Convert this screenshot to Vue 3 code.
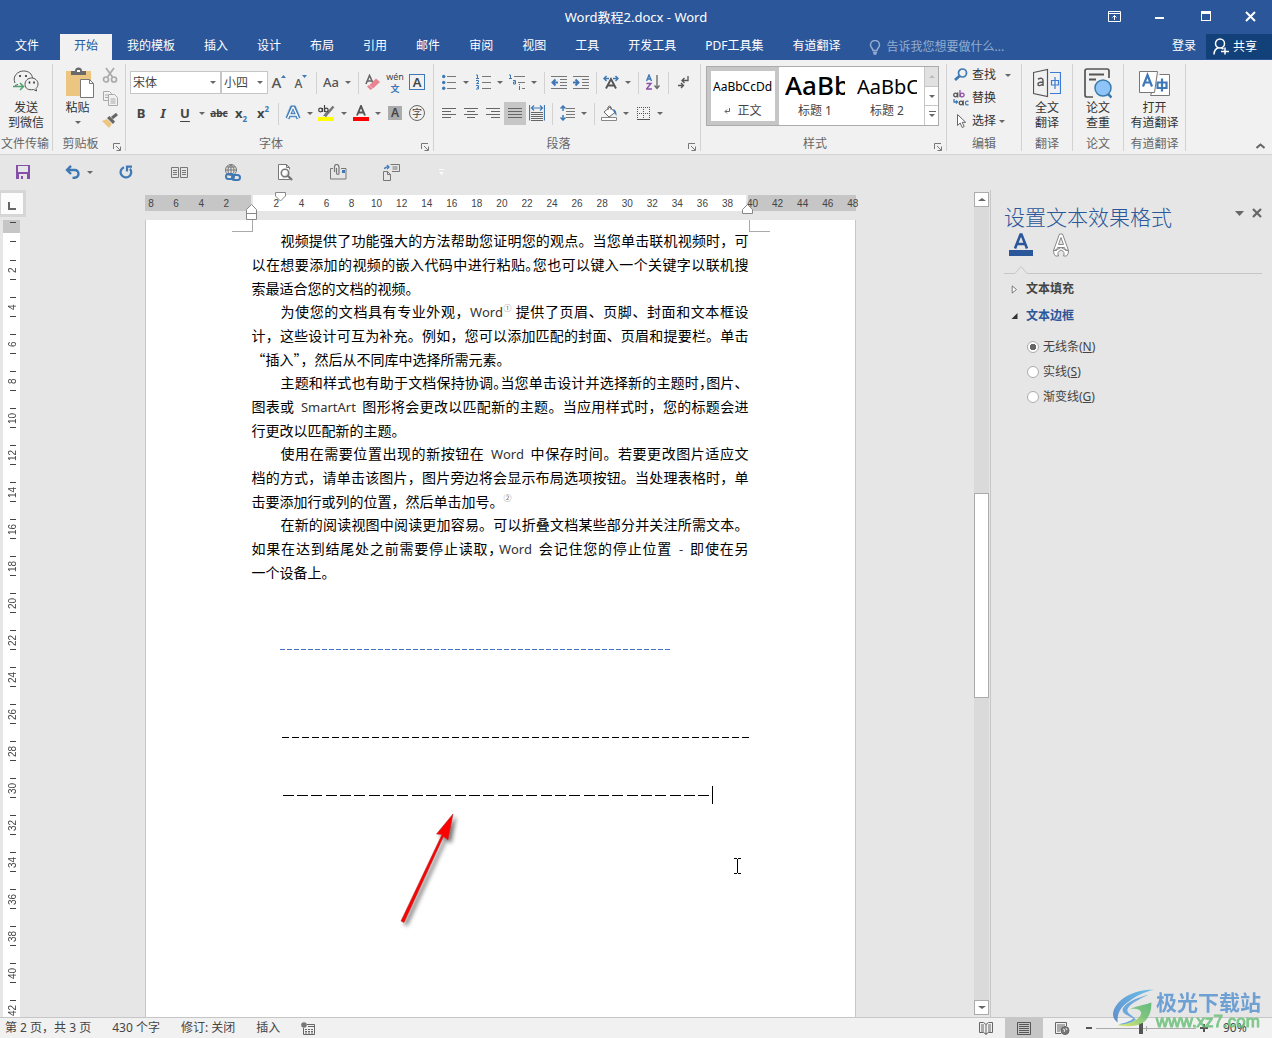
<script setup>
import { ref } from 'vue'

const tabs = ['文件', '开始', '我的模板', '插入', '设计', '布局', '引用', '邮件', '审阅', '视图', '工具', '开发工具', 'PDF工具集', '有道翻译']
const active = ref('开始')
const lineMode = ref('N')
const lineModes = [
  { key: 'N', label: '无线条' },
  { key: 'S', label: '实线' },
  { key: 'G', label: '渐变线' },
]
const zoom = ref(45)

const rulerMarks = [8, 6, 4, 2, '']
for (let n = 2; n <= 48; n += 2) rulerMarks.push(n)
const sideMarks = []
for (let n = 2; n <= 42; n += 2) sideMarks.push(n)
</script>

<template>
  <div class="app">
    <header class="top">
      <div class="titlebar">
        <h1>Word教程2.docx - Word</h1>
        <div class="winbtns">
          <button aria-label="功能区显示选项"><svg width="13" height="11" viewBox="0 0 13 11" fill="none" stroke="#fff"><path d="M.5 .5h12v10H.5zM.5 2.500h12M6.500 9V4.500M4.500 6.500l2-2 2 2" /></svg></button>
          <button aria-label="最小化"><svg width="10" height="11" viewBox="0 0 10 11"><path d="M0 6h9v2H0z" fill="#fff" /></svg></button>
          <button aria-label="最大化"><svg width="10" height="10" viewBox="0 0 10 10"><path d="M0 0h10v10H0zM1 3v6h8V3z" fill="#fff" fill-rule="evenodd" /></svg></button>
          <button aria-label="关闭"><svg width="11" height="11" viewBox="0 0 11 11" stroke="#fff" stroke-width="2"><path d="M1 1l9 9M10 1l-9 9" /></svg></button>
        </div>
      </div>
      <nav class="tabs">
        <button v-for="t in tabs" :key="t" class="tab" :class="{ on: t === active, file: t === '文件' }" @click="active = t">{{ t }}</button>
        <label class="tell">
          <svg width="12" height="15" viewBox="0 0 12 15" fill="none" stroke="#94accf" stroke-width="1.500"><path d="M4 10.500C4 8.500 1.500 7.500 1.500 5a4.300 4.300 0 0 1 9 0c0 2.500-2.500 3.500-2.500 5.500zM4 12.500h4M4.500 14h3" /></svg>
          <input type="text" placeholder="告诉我您想要做什么..." aria-label="告诉我您想要做什么">
        </label>
        <button class="login">登录</button>
        <button class="share">
          <svg width="16" height="17" viewBox="0 0 16 17" fill="none" stroke="#fff" stroke-width="1.500"><circle cx="7" cy="5.500" r="4.500" /><path d="M1 16.500c0-4 2-6 4.500-7M8.500 10l2 1M8 13.500h8M12 9.500v7" /></svg>
          共享
        </button>
      </nav>
    </header>

    <section class="ribbon">
      <div class="group g-wx">
        <div class="body">
          <button class="big">
            <svg width="26" height="32" viewBox="0 0 26 32" fill="none" stroke="#555"><path d="M2 16C-1 9 5 4 10.500 4S19 7 19.500 11M2 18.500l3-1" /><path d="M12 17.500c0-4 3-6.500 6.500-6.500s6.500 2.500 6.500 6c0 2-1 3.500-2 4.500l.5 2.500-3-1.500c-5 1-8.500-1-8.500-5z" /><path d="M7 8v2M13 8v2M16.500 14.500v2M21 14.500v2" stroke="#222" stroke-width="1.500" /><path d="M0 19.500h10M7 16l3.500 3.500L7 23" stroke="#4fa36d" stroke-width="1.500" /></svg>
            <span>发送<br>到微信</span>
          </button>
        </div>
        <div class="glabel">文件传输</div>
      </div>

      <div class="group g-clip">
        <div class="body row">
          <button class="big paste">
            <svg width="30" height="32" viewBox="0 0 30 32"><path d="M1 4h25v25H1z" fill="#ecc581" /><path d="M6 8V4h4a3.500 3.500 0 0 1 7 0h4v4z" fill="#6a6a6a" /><path d="M12 3h3v2h-3z" fill="#fff" /><path d="M15.500 12.500h9l4 4v14h-13z" fill="#fff" stroke="#777" /><path d="M24.500 12.500v4h4" fill="none" stroke="#777" /></svg>
            <span>粘贴</span><i class="caret"></i>
          </button>
          <div class="col">
            <button class="ib" aria-label="剪切"><svg width="16" height="16" viewBox="0 0 16 16" fill="none" stroke="#aaa" stroke-width="1.700"><path d="M4 1l6.500 9M12 1L5.500 10" /><circle cx="4" cy="12.500" r="2.500" /><circle cx="12" cy="12.500" r="2.500" /></svg></button>
            <button class="ib" aria-label="复制"><svg width="16" height="16" viewBox="0 0 16 16" fill="#f1f1f1" stroke="#aaa"><path d="M1.500 1.500h6l2 2v7h-8z" /><path d="M6.500 4.500h6l3 3v8h-9z" /><path d="M3 5h3M3 7.500h3M8.500 9h5M8.500 11h5M8.500 13h5" /></svg></button>
            <button class="ib" aria-label="格式刷"><svg width="16" height="16" viewBox="0 0 16 16"><path d="M0 8l5-2 5 5-3 4z" fill="#ecc581" /><path d="M5 5l2.500-2L13 8.500 11 11z" fill="#666" /><path d="M10 5l5-4" stroke="#666" stroke-width="3" /></svg></button>
          </div>
        </div>
        <div class="glabel">剪贴板</div>
        <button class="launch" aria-label="剪贴板设置"><svg width="8" height="8" viewBox="0 0 8 8" fill="none" stroke="#777"><path d="M.5 6V.5H7M3 3l4 4M7.500 3.500v4h-4" /></svg></button>
      </div>

      <div class="group g-font">
        <div class="body rows">
          <div class="row">
            <span class="combo c-face"><select aria-label="字体"><option>宋体</option></select></span>
            <span class="combo c-size"><select aria-label="字号"><option>小四</option></select></span>
            <button class="ib lat" aria-label="增大字号"><span class="t16">A</span><svg class="sup" width="5" height="3" viewBox="0 0 5 3"><path d="M0 3L2.500 0 5 3z" fill="#3e78b5" /></svg></button>
            <button class="ib lat" aria-label="减小字号"><span class="t13">A</span><svg class="sup" width="5" height="3" viewBox="0 0 5 3"><path d="M0 0L2.500 3 5 0z" fill="#3e78b5" /></svg></button>
            <i class="sep"></i>
            <button class="ib lat aa" aria-label="更改大小写">Aa</button><i class="caret cb"></i>
            <i class="sep"></i>
            <button class="ib" aria-label="清除格式"><svg width="16" height="17" viewBox="0 0 16 17"><path d="M1 10L4.500 1.500 8 9M2.500 7H7" fill="none" stroke="#666" stroke-width="1.600" /><path d="M4.500 11L11 4.500l4 3.500-7 6.500z" fill="#e8838f" /><path d="M2 12.500l2-1.500 3.500 3.500-2 1.500z" fill="#e8838f" /></svg></button>
            <button class="ib wen" aria-label="拼音指南"><span class="py">wén</span><span class="hz">文</span></button>
            <button class="ib" aria-label="字符边框"><span class="boxed">A</span></button>
          </div>
          <div class="row">
            <button class="ib lat b">B</button>
            <button class="ib lat b i">I</button>
            <button class="ib lat b u">U</button><i class="caret cb"></i>
            <button class="ib lat b s">abc</button>
            <button class="ib lat b">x<sub>2</sub></button>
            <button class="ib lat b">x<sup>2</sup></button>
            <i class="sep"></i>
            <button class="ib" aria-label="文本效果"><svg width="16" height="16" viewBox="0 0 16 16" fill="none"><path d="M2.500 13.500L7 2.500h2l4.500 11M4.500 10h7" stroke="#a9c8e8" stroke-width="5" stroke-linejoin="round" /><path d="M2.500 13.500L7 2.500h2l4.500 11M4.500 10h7" stroke="#3e78b5" stroke-width="3.600" /><path d="M2.500 13.500L7.500 2.500h1l5 11M4.500 10h7" stroke="#fff" stroke-width="1.400" /></svg></button><i class="caret cb"></i>
            <button class="ib" aria-label="突出显示"><svg width="18" height="17" viewBox="0 0 18 17"><path d="M0 12h16v4H0z" fill="#ff0" /><path d="M15.500 1.500L9 9l-2 2.500" stroke="#777" stroke-width="2.500" /><path d="M5 11l3-4 2 2-2 2z" fill="#777" /><g fill="none" stroke="#444" stroke-width="1.200"><circle cx="2.500" cy="5" r="1.800" /><path d="M4.500 3v4M6.500 0v7" /><circle cx="8.300" cy="5" r="1.800" /></g></svg></button><i class="caret cb"></i>
            <button class="ib" aria-label="字体颜色"><svg width="16" height="17" viewBox="0 0 16 17"><path d="M0 12h16v4H0z" fill="red" /><path d="M4 10.500L8 1l4 9.500M5.300 7.500h5.400" fill="none" stroke="#555" stroke-width="1.900" /></svg></button><i class="caret cb"></i>
            <button class="ib" aria-label="字符底纹"><span class="shade">A</span></button>
            <button class="ib" aria-label="带圈字符"><span class="ring">字</span></button>
          </div>
        </div>
        <div class="glabel">字体</div>
        <button class="launch" aria-label="字体设置"><svg width="8" height="8" viewBox="0 0 8 8" fill="none" stroke="#777"><path d="M.5 6V.5H7M3 3l4 4M7.500 3.500v4h-4" /></svg></button>
      </div>

      <div class="group g-para">
        <div class="body rows">
          <div class="row">
            <button class="ib" aria-label="项目符号"><svg width="14" height="16" viewBox="0 0 14 16"><path d="M5 2.500h9M5 8.500h9M5 14.500h9" stroke="#777" /><g fill="#3e78b5"><circle cx="1.700" cy="2.500" r="1.700" /><circle cx="1.700" cy="8.500" r="1.700" /><circle cx="1.700" cy="14.300" r="1.700" /></g></svg></button><i class="caret cb"></i>
            <button class="ib" aria-label="编号"><svg width="15" height="16" viewBox="0 0 15 16" fill="none"><path d="M6 2.500h9M6 8.500h9M6 14.500h9" stroke="#777" /><path d="M0 1h1.500v3.500M0 4.500h3M0 6.500h2.500v1.500L.5 9.500H3M0 11.500h2.500v3.500H0M1 13.300h1.500" stroke="#3e78b5" /></svg></button><i class="caret cb"></i>
            <button class="ib" aria-label="多级列表"><svg width="16" height="16" viewBox="0 0 16 16" fill="none"><path d="M5 2.500h11M9 8.500h7M13 14.500h3" stroke="#777" /><path d="M0 1h1.500v3.500M0 4.500h3M4 6.500h2.500v3.500H4.500V8h2M10.500 10v1M10.500 12v4" stroke="#3e78b5" /></svg></button><i class="caret cb"></i>
            <i class="sep"></i>
            <button class="ib" aria-label="减少缩进量"><svg width="16" height="13" viewBox="0 0 16 13"><path d="M0 .5h16M9 3.500h7M9 6.500h7M9 9.500h7M0 12.500h16" stroke="#777" /><path d="M7 6.500H2M4.500 3.500l-3 3 3 3" fill="none" stroke="#3e78b5" stroke-width="2" /></svg></button>
            <button class="ib" aria-label="增加缩进量"><svg width="16" height="13" viewBox="0 0 16 13"><path d="M0 .5h16M9 3.500h7M9 6.500h7M9 9.500h7M0 12.500h16" stroke="#777" /><path d="M0 6.500h5M2.500 3.500l3 3-3 3" fill="none" stroke="#3e78b5" stroke-width="2" /></svg></button>
            <i class="sep"></i>
            <button class="ib" aria-label="中文版式"><svg width="16" height="14" viewBox="0 0 16 14" fill="none"><path d="M3 13.500L8 4l5 9.500M5 10.500h6" stroke="#555" stroke-width="1.900" /><path d="M6 3.500H1M3.500 1L1 3.500 3.500 6M10 3.500h5M12.500 1L15 3.500 12.500 6" stroke="#3e78b5" stroke-width="1.500" /></svg></button><i class="caret cb"></i>
            <i class="sep"></i>
            <button class="ib" aria-label="排序"><svg width="14" height="16" viewBox="0 0 14 16" fill="none"><path d="M.5 7L3 1l2.500 6M1.500 5h3" stroke="#3e78b5" stroke-width="1.400" /><path d="M.5 9.500h4.500L.5 15H6" stroke="#8e4fa8" stroke-width="1.400" /><path d="M11 1v13M8.500 11.500L11 14.500l2.500-3" stroke="#666" stroke-width="1.300" /></svg></button>
            <i class="sep"></i>
            <button class="ib" aria-label="显示编辑标记"><svg width="11" height="13" viewBox="0 0 11 13" fill="none" stroke="#555" stroke-width="1.300"><path d="M10 0v4.500H4M6.500 2L4 4.500 6.500 7M0 9.500h5.500M3 7l2.500 2.500L3 12" /></svg></button>
          </div>
          <div class="row">
            <button class="ib" aria-label="左对齐"><svg width="14" height="10" viewBox="0 0 14 10" stroke="#666"><path d="M0 .5h14M0 3.500h9M0 6.500h14M0 9.500h9" /></svg></button>
            <button class="ib" aria-label="居中"><svg width="14" height="10" viewBox="0 0 14 10" stroke="#666"><path d="M0 .5h14M3 3.500h8M0 6.500h14M3 9.500h8" /></svg></button>
            <button class="ib" aria-label="右对齐"><svg width="14" height="10" viewBox="0 0 14 10" stroke="#666"><path d="M0 .5h14M5 3.500h9M0 6.500h14M5 9.500h9" /></svg></button>
            <button class="ib pressed" aria-label="两端对齐"><svg width="14" height="10" viewBox="0 0 14 10" stroke="#666"><path d="M0 .5h14M0 3.500h14M0 6.500h14M0 9.500h14" /></svg></button>
            <button class="ib" aria-label="分散对齐"><svg width="16" height="16" viewBox="0 0 16 16" fill="none"><path d="M.5 0v15.500M15.500 0v15.500M3 3h10M5 .5L2.500 3 5 5.500M11 .5L13.500 3 11 5.500" stroke="#3e78b5" stroke-width="1.200" /><path d="M2 7.500h12M2 9.500h12M2 11.500h12M2 13.500h12M2 15.500h12" stroke="#666" /></svg></button>
            <i class="sep"></i>
            <button class="ib" aria-label="行距"><svg width="15" height="16" viewBox="0 0 15 16" fill="none"><path d="M6 3.500h9M6 6.500h9M6 9.500h9M6 12.500h9" stroke="#777" /><path d="M3 1v5M3 10v5M.5 3.500L3 1l2.500 2.500M.5 12.500L3 15l2.500-2.500" stroke="#3e78b5" stroke-width="1.500" /></svg></button><i class="caret cb"></i>
            <i class="sep"></i>
            <button class="ib" aria-label="底纹"><svg width="17" height="17" viewBox="0 0 17 17" fill="none"><path d="M.5 12.500h15v3H.5z" fill="#fff" stroke="#888" /><path d="M3 7l6-5 5 5.500-6 4.500zM7 5V2q1.500-2 3 0v3" fill="#fff" stroke="#666" /><path d="M12 4q4 1 3.500 7L13.500 8z" fill="#3e78b5" /></svg></button><i class="caret cb"></i>
            <button class="ib" aria-label="边框"><svg width="13" height="13" viewBox="0 0 13 13" fill="none" stroke="#555" stroke-dasharray="1 1"><path d="M0 .5h13M.5 0v13M12.500 0v13M6.500 0v13M0 6.500h13" /><path d="M0 12.500h13" stroke-dasharray="none" /></svg></button><i class="caret cb"></i>
          </div>
        </div>
        <div class="glabel">段落</div>
        <button class="launch" aria-label="段落设置"><svg width="8" height="8" viewBox="0 0 8 8" fill="none" stroke="#777"><path d="M.5 6V.5H7M3 3l4 4M7.500 3.500v4h-4" /></svg></button>
      </div>

      <div class="group g-style">
        <div class="body">
          <div class="gallery">
            <button class="cell sel"><span class="sample s1">AaBbCcDd</span><span class="cl"><svg width="6" height="6" viewBox="0 0 6 6" fill="none" stroke="#666"><path d="M5.500 0v3.500H1M3 1.500l-2 2 2 2" /></svg> 正文</span></button>
            <button class="cell"><span class="sample s2">AaBb</span><span class="cl">标题 1</span></button>
            <button class="cell"><span class="sample s3">AaBbC</span><span class="cl">标题 2</span></button>
            <div class="gscroll">
              <button class="off" aria-label="上一行"><i class="caret up"></i></button>
              <button aria-label="下一行"><i class="caret"></i></button>
              <button aria-label="其他"><i class="caret bar"></i></button>
            </div>
          </div>
        </div>
        <div class="glabel">样式</div>
        <button class="launch" aria-label="样式设置"><svg width="8" height="8" viewBox="0 0 8 8" fill="none" stroke="#777"><path d="M.5 6V.5H7M3 3l4 4M7.500 3.500v4h-4" /></svg></button>
      </div>

      <div class="group g-edit">
        <div class="body col">
          <button class="tb"><svg width="16" height="14" viewBox="0 0 16 14" fill="none" stroke="#3e78b5"><circle cx="9.500" cy="5" r="4" stroke-width="1.700" /><path d="M6.500 8L2 12" stroke-width="2.800" /></svg>查找<i class="caret far"></i></button>
          <button class="tb"><svg width="16" height="16" viewBox="0 0 16 16" fill="none" stroke-width="1.300"><g stroke="#555"><circle cx="2.500" cy="5" r="1.800" /><path d="M4.700 2.500v5" /><circle cx="8" cy="13" r="1.800" /><path d="M10.200 10.500v5" /></g><path d="M7 0v7" stroke="#8e4fa8" /><circle cx="9.200" cy="5" r="1.900" stroke="#8e4fa8" /><path d="M15.500 11.300q-3-1-3 1.700t3 1.700M1 9v3h3.500M3 10.500L4.500 12 3 13.500" stroke="#3e78b5" /></svg>替换</button>
          <button class="tb"><svg width="16" height="16" viewBox="0 0 16 16" fill="#fff" stroke="#666"><path d="M4.500 1.500v11l2.700-2.500 2 4.500 2-1-2-4.200h3.500z" /></svg>选择<i class="caret"></i></button>
        </div>
        <div class="glabel">编辑</div>
      </div>

      <div class="group g-tr">
        <div class="body"><button class="big"><svg width="28" height="32" viewBox="0 0 28 32" fill="none"><path d="M.5 5.500L14.500 2.500v27L.5 26.500z" stroke="#555" stroke-width="1.200" /><path d="M5 12q5-2 5 1.500V19M10 15q-5.500 0-5 2.500t5-.500" stroke="#555" stroke-width="1.400" /><path d="M17 5.500h10.500v21H17M18.500 13.500h7v4.500h-7zM22 10v12" stroke="#3d7ad6" stroke-width="1.200" /></svg><span>全文<br>翻译</span></button></div>
        <div class="glabel">翻译</div>
      </div>
      <div class="group g-pa">
        <div class="body"><button class="big"><svg width="28" height="32" viewBox="0 0 28 32" fill="none"><path d="M9 30H3q-2 0-2-2V4q0-2 2-2h20q2 0 2 2v7" stroke="#555" stroke-width="1.700" /><path d="M5 7.500h15M5 12.500h7" stroke="#555" stroke-width="1.800" /><circle cx="19" cy="21" r="8" fill="#8ec4f7" stroke="#3a7bab" stroke-width="1.500" /><path d="M24 27l3.500 3.500" stroke="#3a7bab" stroke-width="2.500" /></svg><span>论文<br>查重</span></button></div>
        <div class="glabel">论文</div>
      </div>
      <div class="group g-yd">
        <div class="body"><button class="big"><svg width="32" height="32" viewBox="0 0 32 32" fill="none"><path d="M20.500 7.500h10v21h-19l2-5" fill="#fff" stroke="#777" /><path d="M.5 4.500h18l-3 21H.5z" fill="#fff" stroke="#777" /><path d="M4 19.500L8.500 8 13 19.500M5.500 15.500h6M18.500 15.500h9v5.500h-9zM23 11.500v13" stroke="#3e78b5" stroke-width="2.200" /></svg><span>打开<br>有道翻译</span></button></div>
        <div class="glabel">有道翻译</div>
      </div>
      <button class="collapse" aria-label="折叠功能区"><svg width="9" height="6" viewBox="0 0 9 6" fill="none" stroke="#666" stroke-width="2"><path d="M.5 5L4.500 1.500 8.500 5" /></svg></button>
    </section>

    <div class="qat">
      <button aria-label="保存"><svg width="14" height="14" viewBox="0 0 14 14"><path d="M0 0h14v14H0zM2 1v6h10V1zM3 9v5h2v-3h2v3h4V9z" fill="#8550a8" fill-rule="evenodd" /></svg></button>
      <button class="undo" aria-label="撤消"><svg width="15" height="14" viewBox="0 0 15 14" fill="none" stroke="#3e78b5" stroke-width="2.400"><path d="M2 5h7.500q4 0 4 4t-6 4M6 .8L2 5l4 4" /></svg></button><i class="caret undoc"></i>
      <button class="redo" aria-label="重复"><svg width="14" height="14" viewBox="0 0 14 14" fill="none" stroke="#3e78b5" stroke-width="2.200"><path d="M5 2.200A5.300 5.300 0 1 0 11 3.800M8 6.500V1.600h5" /></svg></button>
      <button aria-label="阅读"><svg width="17" height="11" viewBox="0 0 17 11" fill="none" stroke="#777"><path d="M.5 .5h7v10h-7zM9.500 .5h7v10h-7zM2 3.500h4M2 5.500h4M2 7.500h4M11 3.500h4M11 5.500h4M11 7.500h4" /></svg></button>
      <button aria-label="超链接"><svg width="17" height="17" viewBox="0 0 17 17" fill="none" stroke="#777"><circle cx="7" cy="6" r="5.500" /><path d="M7 .5v9M1.500 6h11M2.500 3h9M4.500 9q-2-4 2.500-8.500M9.500 9q2-4-2.500-8.500" /><g stroke="#3e78b5" stroke-width="2"><rect x="2" y="10" width="8" height="5" rx="2.500" /><rect x="8" y="11" width="8" height="5" rx="2.500" /></g></svg></button>
      <button aria-label="打印预览"><svg width="15" height="17" viewBox="0 0 15 17" fill="none" stroke="#777"><path d="M3 15.500H.500V.5h8l3 3v2M8.500 .5v3h3M3 15.500h8.500V13" fill="#fff" /><circle cx="7" cy="9" r="3.700" stroke-width="1.600" /><path d="M9.500 11.500l4.500 4.500" stroke-width="2.400" /></svg></button>
      <button aria-label="附件邮件"><svg width="17" height="16" viewBox="0 0 17 16" fill="none" stroke="#777"><path d="M3 4.500H.500v10.500h15.500V4.500H11" /><path d="M4.500 8V3q0-2.500 2.200-2.500T9 3v6q0 1.500-1.200 1.500T6.500 9V4M4.500 8" stroke-width="1.200" /><path d="M12 6h3v3h-3z" fill="#3e78b5" stroke="none" /></svg></button>
      <button aria-label="导出"><svg width="17" height="17" viewBox="0 0 17 17" fill="none" stroke="#777"><path d="M.5 7.500h4l3 3v6h-7zM4.500 7.500v3h3M7.500 .5h9v7H9M9.500 3h5M9.500 5h5" /><path d="M1.500 5Q2 2.500 5.500 3M4 1l2 2-2 2" stroke="#3e78b5" stroke-width="1.300" /></svg></button>
      <button aria-label="自定义快速访问工具栏"><svg width="5" height="6" viewBox="0 0 5 6" fill="#fafafa"><path d="M0 0h5v1H0zM0 3h5L2.500 6z" /></svg></button>
    </div>

    <main class="work">
      <div class="side">
        <button class="tabsel" aria-label="制表符"><svg width="8" height="8" viewBox="0 0 8 8" fill="none" stroke="#666" stroke-width="2"><path d="M1 0v7h7" /></svg></button>
        <div class="vruler">
          <div class="vgrey"></div>
          <div class="vzero"></div>
          <div v-for="n in sideMarks" :key="n" class="vmark"><span>{{ n }}</span></div>
        </div>
      </div>

      <div class="canvas">
        <div class="hruler">
          <i class="hg l"></i><i class="hw"></i><i class="hg r"></i>
          <div class="hnums"><span v-for="(n, k) in rulerMarks" :key="k">{{ n }}</span></div>
          <svg class="mk m1" width="11" height="10" viewBox="0 0 11 10"><path d="M.5 .5h10v3.500l-5 5-5-5z" fill="#fff" stroke="#888" /></svg>
          <svg class="mk m2" width="11" height="16" viewBox="0 0 11 16"><path d="M.5 15.500V5.500l5-5 5 5v10zM.5 9.500h10" fill="#fff" stroke="#888" /></svg>
          <svg class="mk m3" width="11" height="10" viewBox="0 0 11 10"><path d="M.5 9.500v-4l5-5 5 5v4z" fill="#fff" stroke="#888" /></svg>
        </div>
        <article class="page">
          <i class="crop cl-l"></i><i class="crop cl-r"></i>
          <p>
            <span class="ln in">视频提供了功能强大的方法帮助您证明您的观点。当您单击联机视频时，可</span>
            <span class="ln">以在想要添加的视频的嵌入代码中进行粘贴<b>。</b>您也可以键入一个关键字以联机搜</span>
            <span class="ln end">索最适合您的文档的视频。</span>
          </p>
          <p>
            <span class="ln in">为使您的文档具有专业外观，<em>Word</em><sup>①</sup> 提供了页眉、页脚、封面和文本框设</span>
            <span class="ln">计，这些设计可互为补充。例如，您可以添加匹配的封面、页眉和提要栏。单击</span>
            <span class="ln end">“插入”，然后从不同库中选择所需元素。</span>
          </p>
          <p>
            <span class="ln in">主题和样式也有助于文档保持协调<b>。</b>当您单击设计并选择新的主题时<b>，</b>图片、</span>
            <span class="ln">图表或 <em class="w">SmartArt</em> 图形将会更改以匹配新的主题。当应用样式时，您的标题会进</span>
            <span class="ln end">行更改以匹配新的主题。</span>
          </p>
          <p>
            <span class="ln in">使用在需要位置出现的新按钮在 <em class="w">Word</em> 中保存时间。若要更改图片适应文</span>
            <span class="ln">档的方式，请单击该图片，图片旁边将会显示布局选项按钮。当处理表格时，单</span>
            <span class="ln end">击要添加行或列的位置，然后单击加号。<sup>②</sup></span>
          </p>
          <p>
            <span class="ln in">在新的阅读视图中阅读更加容易。可以折叠文档某些部分并关注所需文本。</span>
            <span class="ln">如果在达到结尾处之前需要停止读取<b>，</b><em class="w">Word</em> 会记住您的停止位置 <em class="w">-</em> 即使在另</span>
            <span class="ln end">一个设备上。</span>
          </p>
          <hr class="d1">
          <hr class="d2">
          <div class="typed"><hr class="d3"><i class="ibar"></i></div>
          <svg class="arrow" width="70" height="125" viewBox="0 0 70 125">
            <defs><filter id="soft" x="-30%" y="-30%" width="160%" height="160%"><feDropShadow dx="3" dy="3" stdDeviation="2" flood-color="#000" flood-opacity=".55" /></filter></defs>
            <path d="M4 110L45 23.500l-5.500-.500L56 3l-5 26-4.500-3.500L7 111.500z" fill="red" stroke="#a33" stroke-width=".6" filter="url(#soft)" />
          </svg>
          <svg class="beam" width="7" height="16" viewBox="0 0 7 16" fill="none" stroke="#000"><path d="M0 .5h3M4 .5h3M3.500 1v14M0 15.500h3M4 15.500h3" /></svg>
        </article>
      </div>

      <div class="vscroll">
        <button aria-label="向上滚动"><i class="caret up"></i></button>
        <div class="track"><div class="thumb"></div></div>
        <button aria-label="向下滚动"><i class="caret"></i></button>
      </div>

      <aside class="pane">
        <div class="phead">
          <h2>设置文本效果格式</h2>
          <button aria-label="任务窗格选项"><svg width="9" height="5" viewBox="0 0 9 5"><path d="M0 0h9L4.500 5z" fill="#666" /></svg></button>
          <button aria-label="关闭窗格"><svg width="10" height="10" viewBox="0 0 10 10" stroke="#666" stroke-width="2.200"><path d="M1 1l8 8M9 1L1 9" /></svg></button>
        </div>
        <div class="ptabs">
          <button aria-label="文本填充与轮廓"><svg width="24" height="24" viewBox="0 0 24 24"><path d="M0 17h24v6H0z" fill="#2b579a" /><path d="M6 15.500L11.500 1.500h1L18 15.500M8 11h8" fill="none" stroke="#2b579a" stroke-width="2.600" /></svg></button>
          <button aria-label="文字效果"><svg width="18" height="24" viewBox="0 0 18 24" fill="#fff" stroke="#888"><path d="M1.500 17.500L7.500 1h3l6 16.500h-3l-1-3h-7l-1 3zM6.500 11.500h5L9 4.500zM1.500 17.500l4-1 3.500-2 3.500 2 4 1q0 4-2 5.500h-3q2-4-2.500-6-4.500 2-2.500 6h-3q-2-1.500-2-5.500z" fill-rule="evenodd" /></svg></button>
        </div>
        <div class="notch"><i></i><svg width="14" height="9" viewBox="0 0 14 9" fill="none" stroke="#c6c6c6"><path d="M0 8.500h1l6-7 6 7h1" /></svg><i class="rest"></i></div>
        <button class="acc"><svg width="6" height="9" viewBox="0 0 6 9"><path d="M.7 .9L5 4.500 .7 8.100z" fill="#fff" stroke="#777" /></svg>文本填充</button>
        <button class="acc open"><svg width="6" height="6" viewBox="0 0 6 6"><path d="M6 0v6H0z" fill="#333" /></svg>文本边框</button>
        <div class="radios" role="radiogroup" aria-label="文本边框">
          <label v-for="m in lineModes" :key="m.key"><input v-model="lineMode" type="radio" name="outline" :value="m.key"><span>{{ m.label }}(<u>{{ m.key }}</u>)</span></label>
        </div>
      </aside>
    </main>

    <footer class="status">
      <span>第 2 页，共 3 页</span>
      <span>430 个字</span>
      <span>修订: 关闭</span>
      <span>插入</span>
      <svg width="14" height="13" viewBox="0 0 14 13" fill="none" stroke="#666"><path d="M6 2.500h7.500v10H2.500V6M7 4.500h6" /><path d="M4 7.500h8M4 9.500h8M4 11h8" stroke-dasharray="2 1" /><circle cx="3" cy="3" r="2.800" fill="#777" stroke="none" /></svg>
      <div class="views">
        <button aria-label="阅读视图"><svg width="14" height="13" viewBox="0 0 14 13" fill="none" stroke="#666"><path d="M6.500 2L4.500 .5h-4v10h4l2.500 1.500 2.500-1.500h4V.5h-4L7.500 2zM7 2v11M2 3h3M2 5h3M2 7h3M2 9h3M9 3h3M9 5h3M9 7h3M9 9h3" /></svg></button>
        <button class="cur" aria-label="页面视图"><svg width="14" height="13" viewBox="0 0 14 13" fill="none" stroke="#555"><path d="M.5 .5h13v12H.5zM2 2.500h10M2 4.500h10M2 6.500h10M2 8.500h10M2 10.500h10" /></svg></button>
        <button aria-label="Web 版式"><svg width="15" height="13" viewBox="0 0 15 13" fill="none" stroke="#666"><path d="M6 11.500H.500V.5h11V4M2 3h8M2 5h6M2 7h4M2 9h3" /><circle cx="10" cy="8.500" r="4" fill="#777" /><path d="M8 7l2 1-1 2M11 6l1 2" stroke="#eee" /></svg></button>
      </div>
      <div class="zoom">
        <button aria-label="缩小"><svg width="6" height="2"><path d="M0 0h6v2H0z" fill="#555" /></svg></button>
        <input v-model="zoom" type="range" min="0" max="100" aria-label="缩放">
        <button aria-label="放大"><svg width="8" height="8"><path d="M0 3h8v2H0zM3 0h2v8H3z" fill="#555" /></svg></button>
        <span class="pct">90%</span>
      </div>
    </footer>

    <div class="mark">
      <svg width="44" height="42" viewBox="0 0 46 42"><defs><linearGradient id="ga" x1="0" y1="1" x2="1" y2="0"><stop offset="0" stop-color="#4a7fc8" /><stop offset="1" stop-color="#55b9e8" /></linearGradient><linearGradient id="gb" x1="0" y1="1" x2="1" y2="0"><stop offset="0" stop-color="#e6ea5c" /><stop offset=".6" stop-color="#6cc070" /><stop offset="1" stop-color="#4fb36b" /></linearGradient></defs><path d="M44 1C24 0 3 11 1 26c0 4 2 7 5 9-1-7 2-16 12-22C24 8 34 3 44 1z" fill="url(#ga)" /><path d="M38 6C26 9 12 15 11 22c0 5 8 6 11 9-3 3-9 5-15 6 6 2 13 0 18-5-3-4-9-6-9-10 1-6 12-11 22-16z" fill="#5a9fdc" /><path d="M19 21c8-4 17-4 22-7 1 10-4 22-15 24-7 2-14 1-21 0 10-1 22-4 25-11 2-5-4-7-11-6z" fill="url(#gb)" /></svg>
      <div><strong>极光下载站</strong><span>www.xz7.com</span></div>
    </div>
  </div>
</template>

<style>
body { margin: 0; }
</style>

<style scoped>
* { box-sizing: border-box; }
.app { position: relative; display: flex; flex-direction: column; height: 100vh; overflow: hidden; background: #e6e6e6; color: #444; font: 12px/16px "Noto Sans", "Noto Sans CJK SC", sans-serif; }
button { padding: 0; border: 0; background: none; color: inherit; font: inherit; display: flex; align-items: center; justify-content: center; }
svg { display: block; flex: none; }
.row { display: flex; }
.col { display: flex; flex-direction: column; gap: 1px; }

.top { background: #2b579a; color: #fff; flex: none; }
.titlebar { position: relative; height: 34px; display: flex; justify-content: center; align-items: center; }
h1 { margin: 0; font-size: 13px; font-weight: 400; }
.winbtns { position: absolute; right: 0; top: 0; display: flex; }
.winbtns button { width: 46px; height: 32px; }
.winbtns button:last-child { width: 43px; }
.tabs { display: flex; height: 26px; }
.tab { padding: 0 14px; margin-right: 1px; line-height: 24px; align-items: flex-start; white-space: nowrap; }
.tab.file { padding: 0 15px; margin-right: 6px; }
.tab.on { background: #f1f1f1; color: #2b579a; }
.tell { display: flex; gap: 5px; align-items: center; margin-left: 14px; flex: 1; min-width: 0; }
.tell input { border: 0; padding: 0; width: 140px; background: none; color: #fff; font: inherit; }
.tell input::placeholder { color: #94accf; }
.login { margin-right: 10px; height: 24px; }
.share { width: 66px; height: 25px; gap: 4px; background: #124078; padding-right: 8px; }

.ribbon { position: relative; display: flex; flex: none; height: 95px; padding: 4px 0 3px; background: #f1f1f1; border-bottom: 1px solid #d2d2d2; }
.group { position: relative; display: flex; flex-direction: column; border-right: 1px solid #d2d2d2; flex: none; }
.body { height: 72px; }
.glabel { text-align: center; color: #666; white-space: nowrap; line-height: 15px; }
.g-wx { width: 53px; }
.g-wx .glabel { text-align: left; padding-left: 1px; }
.g-clip { width: 73px; }
.g-font { width: 308px; }
.g-clip .glabel, .g-font .glabel, .g-para .glabel, .g-style .glabel { padding-right: 17px; }
.g-para { width: 267px; }
.g-style { width: 246px; }
.g-edit { width: 75px; }
.g-tr, .g-pa { width: 51px; }
.g-yd { width: 62px; }
.big { flex-direction: column; width: 100%; padding-top: 3px; justify-content: flex-start; line-height: 15px; white-space: nowrap; color: #333; }
.big > span { padding-top: 1px; }
.paste { width: 47px; padding-left: 2px; }
.paste .caret { margin-top: 6px; }
.paste svg { margin-left: 4px; }
.launch { position: absolute; right: 4px; bottom: 0; width: 8px; height: 8px; }
.rows { display: flex; flex-direction: column; gap: 8px; padding: 7px 0 0 4px; }
.rows .row { height: 23px; align-items: center; }
.ib { width: 22px; height: 23px; flex: none; position: relative; padding-bottom: 1px; }
.g-clip .ib { height: 22px; width: 20px; }
.pressed { background: #c6c6c6; }
.caret { flex: none; width: 0; height: 0; border: 3px solid transparent; border-top-color: #666; border-bottom: 0; }
.caret.up { border-top: 0; border-bottom: 3px solid #888; }
.cb { margin: 0 3px; }
.sep { width: 1px; height: 22px; margin: 0 3px 0 4px; background: #d2d2d2; flex: none; }
.lat { font-size: 14px; font-weight: 500; color: #555; }
.aa { font-size: 13px; }
.t16 { font-size: 15px; }
.t13 { font-size: 12px; padding-top: 3px; }
.sup { align-self: flex-start; margin-top: 4px; }
.b { font-weight: 700; font-size: 13px; color: #444; }
.i { font-style: italic; }
.u { text-decoration: underline; text-underline-offset: 3px; }
.s { text-decoration: line-through; font-size: 10px; }
sub, sup { font-size: 8px; line-height: 8px; color: #3e78b5; }
.lat sub { align-self: flex-end; padding-bottom: 1px; }
.lat sup { align-self: flex-start; padding-top: 3px; }
.wen { flex-direction: column; }
.py { font-size: 9px; line-height: 12px; }
.hz { font-size: 9px; line-height: 11px; color: #3e78b5; font-weight: 700; }
.boxed { width: 16px; height: 16px; border: 1px solid #3e78b5; font-size: 13px; line-height: 14px; font-weight: 600; }
.shade { width: 14px; height: 14px; background: #ababab; line-height: 14px; font-weight: 600; }
.ring { width: 16px; height: 16px; border: 1px solid #666; border-radius: 50%; font-size: 10px; line-height: 14px; }
.combo { position: relative; display: block; height: 23px; }
.combo select { width: 100%; height: 23px; appearance: none; border: 1px solid #c6c6c6; border-radius: 0; background: #fff; color: #444; font: inherit; padding: 0 2px; }
.combo::after { content: ""; position: absolute; right: 5px; top: 10px; border: 3px solid transparent; border-top-color: #666; border-bottom: 0; pointer-events: none; }
.c-face { width: 91px; }
.c-size { width: 47px; }
.gallery { display: flex; margin: 2px 0 0 5px; width: 233px; height: 60px; border: 1px solid #ababab; background: #fff; }
.cell { width: 72px; flex-direction: column; justify-content: flex-start; padding-top: 3px; }
.cell.sel { box-shadow: inset 0 0 0 4px #c6c6c6; }
.sample { width: 60px; height: 34px; line-height: 34px; overflow: hidden; white-space: nowrap; text-align: left; color: #000; }
.s2 { font-size: 26px; font-weight: 500; line-height: 30px; }
.s3 { font-size: 20px; }
.cl { display: flex; align-items: center; gap: 4px; line-height: 14px; white-space: pre; }
.gscroll { display: flex; flex-direction: column; margin-left: auto; width: 14px; }
.gscroll button { flex: 1; border-left: 1px solid #c6c6c6; border-bottom: 1px solid #c6c6c6; }
.gscroll button:last-child { border-bottom: 0; }
.gscroll .off { background: #e1e1e1; }
.gscroll .off .caret { border-bottom-color: #bbb; }
.bar { position: relative; }
.bar::before { content: ""; position: absolute; left: -3px; top: -6px; width: 7px; height: 1px; background: #666; }
.tb { height: 22px; justify-content: flex-start; padding-left: 6px; gap: 3px; color: #333; }
.far { margin-left: 6px; }
.collapse { position: absolute; right: 7px; bottom: 5px; }

.qat { display: flex; align-items: center; height: 35px; flex: none; padding: 0 0 1px 10px; }
.qat button { width: 26px; height: 26px; margin-right: 27px; }
.qat .undo { margin-right: 0; margin-left: -4px; }
.undoc { margin: 0 20px 0 2px; }
.qat button:last-child { margin-left: -3px; }

.work { flex: 1; display: flex; min-height: 0; }
.side { width: 26px; flex: none; display: flex; flex-direction: column; overflow: hidden; }
.tabsel { width: 26px; height: 27px; flex: none; border: 3px solid #d6d6d6; border-left-width: 1px; background: #fcfcfc; padding-top: 4px; }
.vruler { width: 17px; margin: 3px 0 0 3px; background: #fff; }
.vgrey { height: 13px; background: #c6c6c6; padding-top: 2px; }
.vgrey::after, .vzero::after { content: ""; display: block; width: 6px; height: 1px; margin-left: 7px; background: #444; }
.vzero { height: 18px; padding-top: 8px; }
.vmark { height: 37px; display: flex; flex-direction: column; align-items: center; justify-content: center; gap: 2px; padding-left: 2px; font: 10px/10px "Liberation Sans", sans-serif; }
.vmark span { writing-mode: vertical-rl; transform: rotate(180deg); height: 14px; text-align: center; }
.vmark::before, .vmark::after { content: ""; width: 6px; height: 1px; background: #444; }
.canvas { flex: 1; min-width: 0; display: flex; flex-direction: column; align-items: center; }
.hruler { position: relative; display: flex; gap: 2px; width: 711px; height: 16px; margin: 5px 0 9px; flex: none; }
.hg { background: #c6c6c6; }
.hg.l { width: 106px; }
.hg.r { width: 108px; }
.hw { flex: 1; background: #fff; }
.hnums { position: absolute; top: 0; bottom: 0; left: -6px; right: -10px; display: flex; font: 10px/17px "Liberation Sans", sans-serif; }
.hnums span { flex: 1; text-align: center; }
.mk { position: absolute; }
.m1 { left: 130px; top: -3px; }
.m2 { left: 101px; top: 9px; }
.m3 { left: 597px; top: 9px; }
.page { position: relative; flex: 1; width: 711px; background: #fff; border: solid #c6c6c6; border-width: 0 1px; padding: 8px 106px 0; color: #000; min-height: 0; }
.crop { position: absolute; top: 0; width: 21px; height: 12px; border: solid #aaa; border-width: 0 1px 1px 0; }
.cl-l { left: 86px; }
.cl-r { right: 85px; border-width: 0 0 1px 1px; }
p { margin: 0 0 -1px; font: 400 14px/24px "Noto Sans CJK SC", sans-serif; }
.ln { display: block; white-space: nowrap; text-align-last: justify; }
.ln.in { padding-left: 29px; }
.ln.end { text-align-last: left; }
.ln b { font-weight: inherit; font-feature-settings: "halt"; }
.ln em { font: 13px/16px "Noto Sans", sans-serif; color: #333; }
.ln em.w { margin: 0 3px; }
.ln sup { color: #777; vertical-align: 6px; }
hr { height: 1px; margin: 0; border: 0; }
.d1 { margin: 66px 79px 0 28px; background: repeating-linear-gradient(90deg, #4472c4 0 5px, #fff 5px 7px); }
.d2 { margin: 87px 0 0 30px; background: repeating-linear-gradient(90deg, #000 0 7px, #fff 7px 10px); }
.typed { display: flex; align-items: center; gap: 2px; height: 18px; margin: 48px 36px 0 31px; }
.d3 { flex: 1; background: repeating-linear-gradient(90deg, #000 0 11px, #fff 11px 14px, #000 14px 25px, #fff 25px 28px, #000 28px 39px, #fff 39px 43px); }
.ibar { width: 1px; height: 18px; background: #000; }
.arrow { position: absolute; left: 251px; top: 591px; }
.beam { position: absolute; left: 588px; top: 638px; }

.vscroll { width: 15px; flex: none; display: flex; flex-direction: column; margin: 2px 1px 2px 0; background: #dadada; }
.vscroll button { height: 15px; border: 1px solid #ababab; background: #fff; }
.vscroll .up { border-bottom-color: #666; }
.vscroll .caret { border-left-width: 4px; border-right-width: 4px; }
.track { flex: 1; display: flex; flex-direction: column; }
.thumb { margin-top: 286px; height: 205px; border: 1px solid #ababab; background: #fff; }
.pane { width: 282px; flex: none; border-left: 1px solid #c6c6c6; padding: 12px 10px 0 13px; }
.phead { display: flex; align-items: flex-start; gap: 8px; }
.phead button { padding-top: 6px; height: 16px; }
h2 { margin: 0; flex: 1; font: 300 21px/28px "Noto Sans CJK SC", sans-serif; color: #2b579a; }
.ptabs { display: flex; gap: 19px; padding: 3px 0 0 5px; height: 32px; align-items: flex-start; }
.notch { display: flex; align-items: flex-end; height: 12px; margin-bottom: 3px; }
.notch i { width: 10px; height: 1px; background: #c6c6c6; }
.notch .rest { flex: 1; }
.acc { height: 24px; margin-bottom: 3px; padding-left: 7px; gap: 8px; font-weight: 700; }
.acc svg { width: 7px; }
.acc.open { color: #2b579a; }
.radios { padding: 3px 0 0 23px; }
.radios label { display: flex; align-items: center; gap: 4px; height: 25px; }
.radios input { appearance: none; width: 12px; height: 12px; margin: 0; border: 1px solid #ababab; border-radius: 50%; background: #fff; }
.radios input:checked { background: radial-gradient(circle, #666 0 3px, #fff 3px); }

.status { flex: none; display: flex; align-items: center; height: 21px; padding-left: 5px; gap: 21px; border-top: 1px solid #c6c6c6; background: #f1f1f1; white-space: nowrap; }
.views { display: flex; margin-left: auto; height: 20px; }
.views button { width: 38px; }
.views .cur { background: #c6c6c6; }
.zoom { display: flex; align-items: center; gap: 4px; margin-left: -16px; width: 186px; }
.zoom input { appearance: none; width: 100px; height: 16px; margin: 0; background: linear-gradient(#aaa, #aaa) center / 100% 1px no-repeat, linear-gradient(#aaa, #aaa) 50px center / 1px 5px no-repeat; }
.zoom input::-webkit-slider-thumb { appearance: none; width: 4px; height: 11px; background: #555; }
.pct { margin-left: 11px; }
.mark { position: absolute; right: 11px; bottom: 8px; display: flex; opacity: .85; pointer-events: none; }
.mark strong { display: block; font: 700 21px/26px "Noto Sans CJK SC", sans-serif; color: #5b94d0; }
.mark span { display: block; font: 17px/16px "Liberation Sans", sans-serif; color: #6cc07a; -webkit-text-stroke: 1px #6cc07a; }
</style>
